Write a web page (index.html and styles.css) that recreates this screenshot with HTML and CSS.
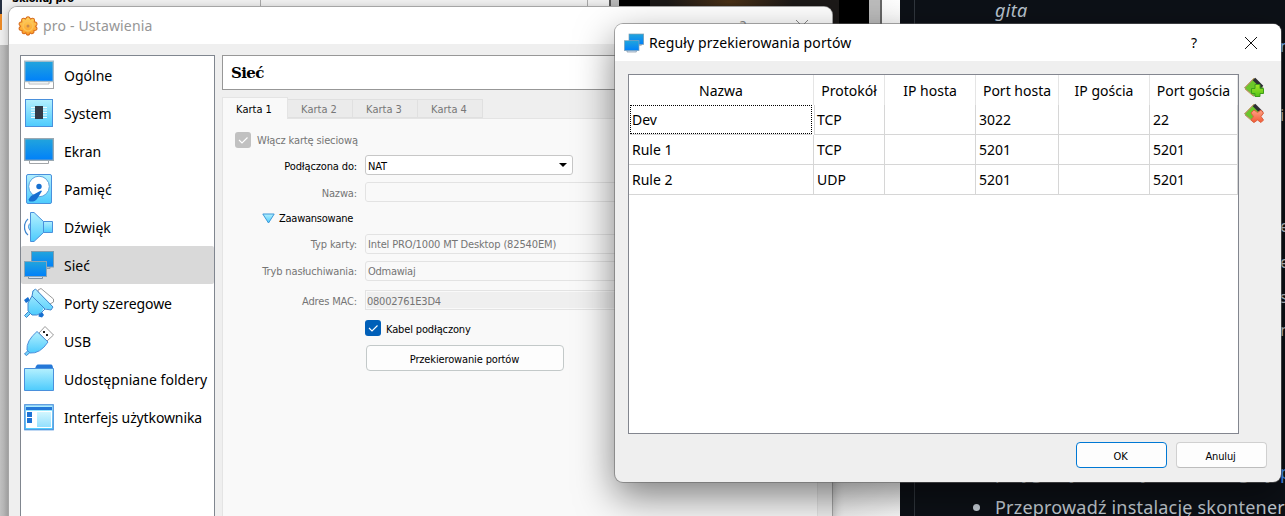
FILE: index.html
```
<!DOCTYPE html>
<html lang="pl">
<head>
<meta charset="utf-8">
<title>pro - Ustawienia</title>
<link rel="stylesheet" href="styles.css">
</head>
<body>
<svg class="defs" width="0" height="0" aria-hidden="true">
  <defs>
    <linearGradient id="screen" x1="0" y1="0" x2="0" y2="1"><stop offset="0" stop-color="#22a5dc"/><stop offset="1" stop-color="#0080fa"/></linearGradient>
    <linearGradient id="ice" x1="0" y1="0" x2="0" y2="1"><stop offset="0" stop-color="#b4f0fe"/><stop offset="1" stop-color="#4dcbfd"/></linearGradient>
    <linearGradient id="gold" x1="0" y1="0" x2="0" y2="1"><stop offset="0" stop-color="#ffd35c"/><stop offset="1" stop-color="#fb9a25"/></linearGradient>
    <linearGradient id="leaf" x1="0" y1="0" x2="0" y2="1"><stop offset="0" stop-color="#a5e62a"/><stop offset="1" stop-color="#52c514"/></linearGradient>
    <linearGradient id="coral" x1="0" y1="0" x2="0" y2="1"><stop offset="0" stop-color="#ffa287"/><stop offset="1" stop-color="#f25b35"/></linearGradient>
    <symbol id="net" viewBox="0 0 30 30">
      <path d="M22 16.500v2h4v-2" fill="#ddd" stroke="#8a9aa8"/>
      <rect x="7.500" y="1.500" width="22" height="15.500" fill="url(#screen)" stroke="#7e9cb0"/>
      <path d="M4.500 26.500v2h14v-2" fill="#cfe0f2" stroke="#7b8ea0"/>
      <rect x=".5" y="11.500" width="22" height="15" fill="url(#screen)" stroke="#8ba6b8"/>
    </symbol>
    <symbol id="card" viewBox="0 0 20 20">
      <path d="M.7 11 10 1.500l9 9L10 19z" fill="#6cc62a" stroke="#8a9a62"/>
      <path d="M.5 10.800 10 1.200M1 12l8.500 7.300" stroke="#c8955a" fill="none"/>
      <path d="m10 2 8 8" stroke="#2d2d33" stroke-width="3.600"/>
    </symbol>
  </defs>
</svg>
<div class="desktop">
  <div class="manager">
    <div class="manager-bar"><span class="clone">Sklonuj pro</span><i class="cell"></i><i class="cell wide"></i></div>
    <i class="orange"></i>
    <div class="preview"><i class="glow"></i></div>
  </div>
  <div class="browser">
    <em class="git">gita</em>
    <span class="frag f1">n</span><span class="frag f2">i</span><span class="frag f3">e</span><span class="frag f4">e</span><span class="frag f5">s</span><span class="frag f6">n</span>
    <span class="cut">przygotuj obraz systemu i nagraj,</span><a class="link">p</a>
    <div class="bullet"><i></i><span>Przeprowadź instalację skontener</span></div>
  </div>

  <section class="window settings">
    <header class="titlebar">
      <svg class="gear" viewBox="0 0 20 20"><path d="M8.500 1.500Q10 0 11.500 1.500L12.500 3 14.300 2.200Q16.300 2 16.500 4L16.300 5.800 18 6.200Q19.500 7.300 18.700 9L17.600 10.200 18.800 11.800Q19.400 13.600 17.700 14.300L16 14.500 15.900 16.300Q15.200 18 13.500 17.700L12.200 16.900 11.300 18.500Q10 19.700 8.600 18.500L7.800 16.900 6.200 17.700Q4.400 17.900 4.100 16.200L4.100 14.500 2.300 14.200Q.7 13.400 1.300 11.800L2.500 10.200 1.300 8.800Q.7 7 2.200 6.200L3.800 5.800 3.600 4Q3.900 2 5.800 2.200L7.500 3z" fill="url(#gold)" stroke="#d96d1c" stroke-width="1.100"/><circle cx="10" cy="10" r="5" fill="none" stroke="#fbc35a" stroke-width="1.500"/><circle cx="10" cy="10" r="1.500" fill="#c98a4b"/></svg>
      <span class="ui title">pro - Ustawienia</span>
      <span class="ui help">?</span>
      <svg class="close" viewBox="0 0 12 12"><path d="m0 0 12 12M12 0 0 12"/></svg>
    </header>
    <div class="body">
      <nav class="list ui">
        <div class="item"><svg viewBox="0 0 30 30"><rect x=".5" y="21.500" width="29" height="7" fill="#fff" stroke="#a2a5a8"/><path d="M5 22v2h20v-2" fill="#fff" stroke="#b9bcbf"/><rect x=".7" y="1.200" width="28.600" height="20.300" fill="url(#screen)" stroke="#a8bcc8" stroke-width="1.400"/></svg><span>Ogólne</span></div>
        <div class="item"><svg viewBox="0 0 30 30"><rect x="1.500" y="1.500" width="27" height="27" fill="url(#ice)" stroke="#4a90dc"/><path d="M7 9.500h16M7 12h16M7 14.500h16M7 17h16M7 19.500h16" stroke="#eefcff"/><rect x="11" y="8" width="8" height="13" fill="#333b48"/></svg><span>System</span></div>
        <div class="item"><svg viewBox="0 0 30 30"><path d="M5.500 24v3.500h19V24" fill="#fff" stroke="#a2a5a8"/><rect x=".7" y="2.700" width="28.600" height="21.600" fill="url(#screen)" stroke="#9aa9b3" stroke-width="1.400"/></svg><span>Ekran</span></div>
        <div class="item"><svg viewBox="0 0 30 30"><rect x="2.500" y=".5" width="25" height="29" rx="1.500" fill="url(#ice)" stroke="#4a90dc"/><circle cx="15" cy="12.500" r="10.300" fill="#fff" stroke="#5aa3de"/><circle cx="15" cy="12.500" r="2.700" fill="#176fd0"/><path d="m18 17-5 8q-2 3-7.500 2.500l-1-2 2.500-3.500 10-5.500z" fill="#176fd0"/></svg><span>Pamięć</span></div>
        <div class="item"><svg viewBox="0 0 30 30"><path d="M4 7C-.7 11-.7 19 4 23" fill="none" stroke="#3e86cf" stroke-width="1.300"/><path d="M7 10.500Q2 14.500 7 19.500z" fill="#9ce6fc" stroke="#4a90dc"/><path d="M18 9.500h10.500v11H18z" fill="url(#ice)" stroke="#4a90dc"/><path d="M6.500.5H10l9.500 9v11l-9.500 9H6.500z" fill="url(#ice)" stroke="#4a90dc"/></svg><span>Dźwięk</span></div>
        <div class="item selected"><svg><use href="#net"/></svg><span>Sieć</span></div>
        <div class="item"><svg viewBox="0 0 30 30"><path d="m14 2 3-1.500L29.500 11v3L26 16 14 4z" fill="#fff" stroke="#999"/><path d="m.5 27.500 5-5 2 2-5 5z" fill="#74d4fa" stroke="#3e86cf"/><path d="m0 12 4-3 2 3.500-4 2.500zM15 25l3-1 2 3-2 2.500-3.500-1z" fill="#176fd0"/><path d="M8 8V3l3-2 18 17.500-2 3.500-7-2-3 5-5 2H8l-4-4v-9z" fill="url(#ice)"/><path d="m8 8 1-5 2.500-2L29 19l-2 3-6-1-4 4-4 2H8l-4-4v-8l4-7 13 13" fill="none" stroke="#3e86cf"/></svg><span class="w7">Porty szeregowe</span></div>
        <div class="item"><svg viewBox="0 0 30 30"><path d="m15 7 6-6.500 8.500 8.500-6.500 6z" fill="#fff" stroke="#999"/><path d="M19 5h2v2h-2zM22 8h2v2h-2z" fill="#222"/><path d="m.5 28 4-4 2 2-4 3.500z" fill="#74d4fa" stroke="#3e86cf"/><path d="M13 5.500 24 16q-8 12-18 11l-3-3Q2 15 13 5.500z" fill="url(#ice)" stroke="#4a90dc"/></svg><span>USB</span></div>
        <div class="item"><svg viewBox="0 0 30 30"><path d="M11 5q1-4.500 3-4.500h13q2 0 2 4.500z" fill="#2478d8"/><path d="M.5 4.500H29.500v22H.5z" fill="url(#ice)" stroke="#4a90dc"/></svg><span class="w9">Udostępniane foldery</span></div>
        <div class="item"><svg viewBox="0 0 30 30"><rect x=".75" y="2.750" width="28.500" height="25" fill="url(#ice)" stroke="#4a90dc" stroke-width="1.200"/><path d="M2 5h26v3H2z" fill="#2478d8"/><path d="M2 9h26v17H2z" fill="#fff"/><path d="M3 10h5v5H3zM3 16h5v5H3z" fill="#1d72d4"/><path d="M13 10h14v15H13z" fill="url(#ice)" opacity=".6"/></svg><span class="w10">Interfejs użytkownika</span></div>
      </nav>
      <main class="page">
        <h1>Sieć</h1>
        <div class="tabs tahoma"><span class="tab active">Karta 1</span><span class="tab">Karta 2</span><span class="tab">Karta 3</span><span class="tab">Karta 4</span></div>
        <div class="panel tahoma">
          <div class="row r1 dim"><svg class="check" viewBox="0 0 16 16"><rect width="16" height="16" rx="3" fill="#c1c1c1"/><path d="m4 8 3 3 5.500-5.500"/></svg><span>Włącz kartę sieciową</span></div>
          <div class="row r2"><label>Podłączona do:</label><div class="field combo"><span>NAT</span><i class="arrow"></i></div></div>
          <div class="row r3 dim"><label>Nazwa:</label><div class="field"></div></div>
          <div class="row r4"><svg class="tri" viewBox="0 0 13 11"><path d="M.8 1h11.400L6.500 10z" fill="url(#ice)" stroke="#3b97d8"/></svg><span class="tight">Zaawansowane</span></div>
          <div class="row r5 dim"><label>Typ karty:</label><div class="field"><span>Intel PRO/1000 MT Desktop (82540EM)</span></div></div>
          <div class="row r6 dim"><label>Tryb nasłuchiwania:</label><div class="field"><span class="tight">Odmawiaj</span></div></div>
          <div class="row r7 dim"><label>Adres MAC:</label><div class="field mac"><span class="tight">08002761E3D4</span></div></div>
          <div class="row r8"><svg class="check" viewBox="0 0 16 16"><rect width="16" height="16" rx="3" fill="#005fb8"/><path d="m4 8 3 3 5.500-5.500"/></svg><span>Kabel podłączony</span></div>
          <div class="row r9"><button class="tahoma forward">Przekierowanie portów</button></div>
        </div>
      </main>
    </div>
  </section>

  <section class="window dialog">
    <header class="titlebar">
      <svg class="neticon"><use href="#net"/></svg>
      <span class="ui title">Reguły przekierowania portów</span>
      <span class="ui help">?</span>
      <svg class="close" viewBox="0 0 12 12"><path d="m0 0 12 12M12 0 0 12"/></svg>
    </header>
    <div class="content">
      <div class="rules ui">
        <div class="tr head"><span>Nazwa</span><span>Protokół</span><span>IP hosta</span><span>Port hosta</span><span>IP gościa</span><span>Port gościa</span></div>
        <div class="tr"><span class="focus">Dev</span><span>TCP</span><span></span><span>3022</span><span></span><span>22</span></div>
        <div class="tr"><span>Rule 1</span><span>TCP</span><span></span><span>5201</span><span></span><span>5201</span></div>
        <div class="tr"><span>Rule 2</span><span>UDP</span><span></span><span>5201</span><span></span><span>5201</span></div>
      </div>
      <div class="tools">
        <svg viewBox="0 0 20 20"><use href="#card"/><path d="M11 7.500h5v4h3.500v5H16v3h-5v-3H7.500v-5H11z" fill="url(#leaf)" stroke="#3f9d1c"/></svg>
        <svg viewBox="0 0 20 20"><use href="#card"/><path d="m7 10 3-3 3.500 2.500L17 7l2.500 3-2.500 3.500 2.500 3.500-2.500 2.500-3.500-2.500-3.500 2.500L7 17l2.500-3.500z" fill="url(#coral)" stroke="#dd6040"/></svg>
      </div>
    </div>
    <footer><button class="tahoma ok">OK</button><button class="tahoma">Anuluj</button></footer>
  </section>
</div>
</body>
</html>
```
FILE: styles.css
```
* { box-sizing: border-box; }
body { margin: 0; }
.defs { position: absolute; }
.desktop { position: relative; width: 1285px; height: 516px; overflow: hidden; background: #c9c9c9; }
.ui { font-family: "Noto Sans", sans-serif; font-size: 14px; color: #000; white-space: nowrap; }
.tahoma { font-family: "DejaVu Sans Condensed", "DejaVu Sans", sans-serif; font-stretch: condensed; font-size: 11px; letter-spacing: -.14px; white-space: nowrap; }
.tight { letter-spacing: -.25px; }

/* application behind the settings window */
.manager { position: absolute; inset: 0 auto 0 0; width: 900px; background: linear-gradient(90deg, #c4c4c4 0, #b5b5b5 9px, #c9c9c9 20px, #f0f0f0 833px, #fff 900px); }
.manager-bar { display: flex; height: 45px; width: 609px; background: #f2f2f2; }
.clone { width: 260px; padding-left: 12px; font: bold 11px/12px "DejaVu Sans Condensed", "DejaVu Sans", sans-serif; letter-spacing: -.15px; margin-top: -7px; }
.cell { width: 327px; border-left: 1px solid #aaa; }
.cell.wide { width: 22px; }
.orange { position: absolute; left: 0; top: 0; width: 2px; height: 30px; background: linear-gradient(#273041 14px, #ee8c27 14px); }
.preview { position: absolute; left: 609px; top: 0; width: 273px; height: 45px; border-left: 2px solid #555; border-right: 2px solid #666; background: linear-gradient(90deg, #bbb 8px, #000 8px, #000 258px, #bcbcbc 258px); }
.glow { display: block; width: 189px; height: 45px; margin-left: 39px; background: radial-gradient(ellipse 70px 20px at 80px 2px, #4b3217, #1d1a19 90%); }

/* dark page */
.browser { position: absolute; left: 900px; top: 0; width: 385px; height: 516px; background: #0d1117; color: #c9d1d9; font: 18px/24px "Noto Sans", sans-serif; overflow: hidden; }
.browser::before { content: ""; position: absolute; left: 14px; top: 0; width: 1px; height: 516px; background: #30363d; }
.git { position: absolute; left: 95px; top: -2px; color: #b9c4ce; letter-spacing: .3px; }
.frag { position: absolute; left: 380px; font-size: 16px; }
.f1 { top: 34px; color: #79b8ff; } .f2 { top: 103px; } .f3 { top: 214px; } .f4 { top: 250px; } .f5 { top: 285px; } .f6 { top: 318px; }
.cut { position: absolute; left: 95px; top: 460px; white-space: nowrap; }
.link { position: absolute; left: 380px; top: 460px; color: #4493f8; }
.bullet { position: absolute; left: 73px; top: 495px; display: flex; align-items: center; gap: 15px; white-space: nowrap; letter-spacing: .2px; }
.bullet i { width: 7px; height: 7px; border-radius: 50%; background: #c9d1d9; }

/* windows */
.window { position: absolute; border-radius: 8px; background: #efefef; overflow: hidden; }
.titlebar { display: flex; align-items: center; background: #fff; }
.close { stroke: #111; fill: none; width: 12px; height: 12px; }
.settings { left: 9px; top: 7px; width: 823px; height: 540px; box-shadow: 0 0 0 1px #a5a5a5, 0 2px 12px rgba(0,0,0,.3); }
.settings .titlebar { height: 37px; padding: 0 24px 0 9px; }
.gear { width: 20px; height: 20px; margin-right: 5px; }
.settings .title { color: #969696; flex: 1; letter-spacing: .17px; }
.settings .help { color: #888; margin-right: 50px; }
.settings .close { stroke: #888; }
.body { display: flex; gap: 7px; padding: 11px 14px 0 11px; height: 503px; }
.list { width: 195px; border: 1px solid #80868f; background: #fff; }
.item { display: flex; align-items: center; height: 38px; padding-left: 3px; gap: 10px; border-radius: 2px; }
.item svg { width: 30px; height: 30px; flex: none; }
.w7 { letter-spacing: -.06px; }
.w9 { letter-spacing: .05px; }
.w10 { letter-spacing: -.12px; }
.selected { background: #d9d9d9; }
.page { flex: 1; display: flex; flex-direction: column; }
h1 { margin: 0; height: 35px; border: 1px solid #979797; background: #fff; padding-left: 8px; font: bold 15px/35px "DejaVu Serif", serif; letter-spacing: -.6px; }
.tabs { display: flex; align-items: flex-end; height: 28px; }
.tab { height: 19px; width: 65px; text-align: center; line-height: 20px; background: #ebebeb; border: 1px solid #e0e0e0; border-left: 0; color: #777; letter-spacing: 0; padding-right: 2px; }
.tab.active { width: 66px; height: 22px; border: 1px solid #e4e4e4; border-bottom: 0; background: #f9f9f9; color: #000; position: relative; margin-bottom: -1px; line-height: 23px; }
.panel { flex: 1; background: #f9f9f9; border: 1px solid #e4e4e4; padding-top: 8px; }
.row { display: flex; align-items: center; gap: 8px; color: #000; }
.row span, .row label { padding-top: 2px; }
.dim { color: #757575; }
.row label { width: 134px; text-align: right; flex: none; }
.r1 { height: 25px; padding-left: 12px; gap: 6px; }
.r2 { height: 26px; }
.r3 { height: 28px; }
.r4 { height: 24px; padding-left: 39px; gap: 4px; }
.r4 span { padding-top: 0; }
.r5 { height: 27px; }
.r6 { height: 27px; }
.r7 { height: 32px; }
.r8 { height: 24px; padding-left: 142px; gap: 5px; }
.r9 { height: 36px; padding-left: 143px; }
.check { width: 16px; height: 16px; }
.check path { fill: none; stroke: #fff; stroke-width: 1.1; }
.field { height: 20px; flex: 1; margin-right: 12px; display: flex; align-items: center; border: 1px solid #e3e3e3; border-radius: 3px; padding: 0 5px 0 2px; }
.combo { flex: none; width: 208px; background: #fff; border-color: #c7c7c7; justify-content: space-between; }
.mac { background: #efefef; box-shadow: inset 0 0 0 1px #f9f9f9; border-radius: 0; padding-left: 1px; }
.arrow { border: 4px solid transparent; border-top-color: #000; border-bottom: 0; }
.tri { width: 13px; height: 11px; }
button { border: 1px solid #d0d0d0; border-bottom-color: #bdbdbd; border-radius: 4px; background: #fdfdfd; color: #000; padding: 2px 2px 0 0; }
.forward { width: 198px; height: 26px; border-color: #c3c9c9; padding: 2px 1px 0 0; }

/* port forwarding dialog */
.dialog { left: 615px; top: 24px; width: 666px; height: 458px; box-shadow: 0 0 0 1px rgba(100,100,100,.55), 0 14px 38px rgba(0,0,0,.5); }
.dialog .titlebar { height: 37px; padding: 0 24px 0 9px; }
.neticon { width: 20px; height: 20px; margin-right: 5px; }
.dialog .title { flex: 1; letter-spacing: .1px; }
.dialog .help { margin-right: 48px; }
.content { display: flex; gap: 5px; padding: 13px 0 0 13px; }
.rules { width: 611px; height: 360px; border: 1px solid #83868f; background: #fff; }
.tr { display: grid; grid-template-columns: 185px 71px 91px 83px 91px 88px; height: 30px; }
.tr span { border-right: 1px solid #d6d6d6; border-bottom: 1px solid #d6d6d6; padding-left: 3px; line-height: 29px; }
.head span { text-align: center; padding: 0; border-bottom: 0; border-color: #e5e5e5; line-height: 31px; }
.tr .focus { padding-left: 2px; outline: 1px dotted #000; outline-offset: -1px; margin: 0 2px 0 1px; border: 0; height: 29px; box-shadow: 2px 0 #fff, 3px 0 #d6d6d6, 0 1px #d6d6d6; }
.tools { display: flex; flex-direction: column; gap: 6px; padding-top: 3px; }
.tools svg { width: 20px; height: 20px; }
footer { display: flex; justify-content: flex-end; gap: 9px; padding: 8px 14px 0 0; }
footer button { width: 91px; height: 26px; }
.ok { border-color: #0078d4; }
```
